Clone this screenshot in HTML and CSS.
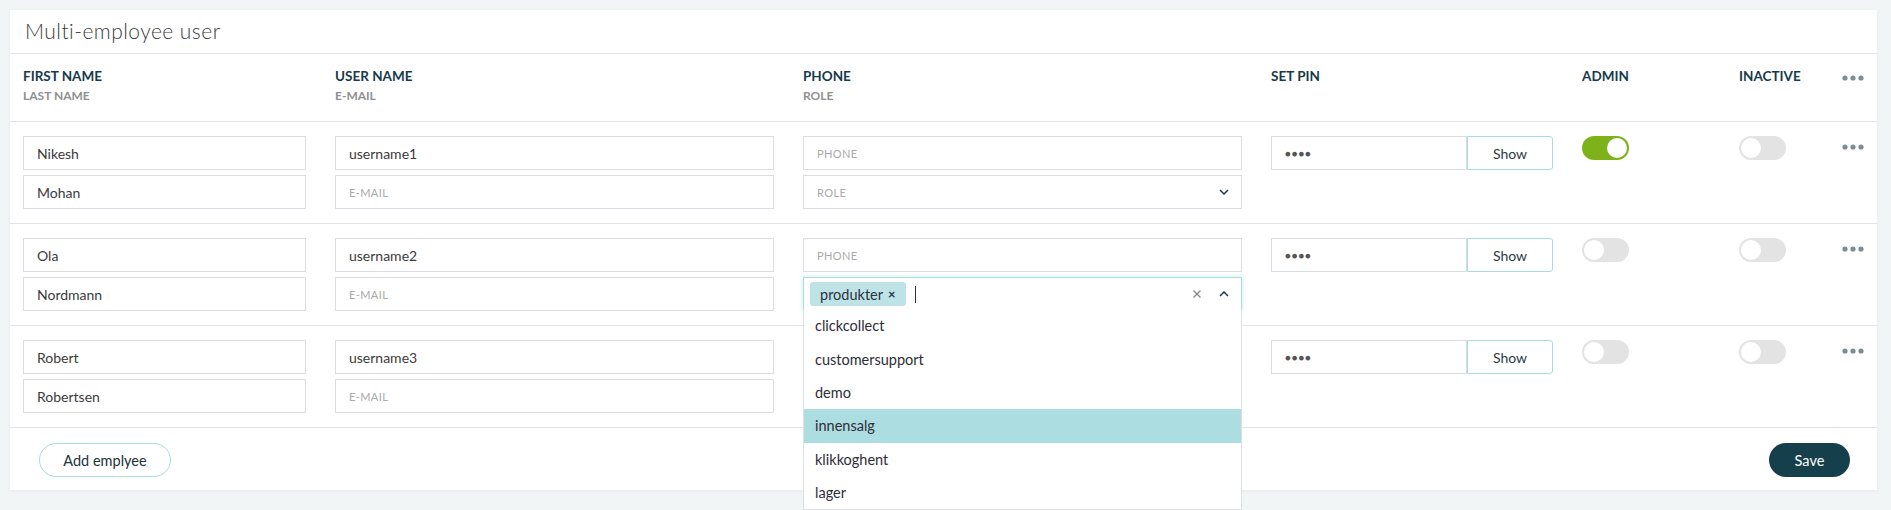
FILE: index.html
```html
<!DOCTYPE html>
<html>
<head>
<meta charset="utf-8">
<link rel="stylesheet" href="styles.css">
</head>
<body>
<div class="card">
  <div class="card-title">Multi-employee user</div>

  <div class="grid head">
    <div><div class="h1">FIRST NAME</div><div class="h2">LAST NAME</div></div>
    <div><div class="h1">USER NAME</div><div class="h2">E-MAIL</div></div>
    <div><div class="h1">PHONE</div><div class="h2">ROLE</div></div>
    <div><div class="h1">SET PIN</div></div>
    <div><div class="h1">ADMIN</div></div>
    <div><div class="h1">INACTIVE</div></div>
    <div class="dots-cell head-dots"><svg class="dots" width="22" height="6" viewBox="0 0 22 6"><circle cx="3" cy="3" r="2.6"/><circle cx="11" cy="3" r="2.6"/><circle cx="19" cy="3" r="2.6"/></svg></div>
  </div>

  <div class="grid row">
    <div class="stack"><div class="field">Nikesh</div><div class="field">Mohan</div></div>
    <div class="stack"><div class="field">username1</div><div class="field ph">E-MAIL</div></div>
    <div class="stack"><div class="field ph">PHONE</div><div class="field ph select">ROLE<svg class="chev" width="10" height="6" viewBox="0 0 10 6"><path d="M1 1l4 4 4-4"/></svg></div></div>
    <div class="pin"><div class="field pin-in">&#9679;&#9679;&#9679;&#9679;</div><div class="show">Show</div></div>
    <div><span class="toggle on"><span class="knob"></span></span></div>
    <div><span class="toggle"><span class="knob"></span></span></div>
    <div class="dots-cell"><svg class="dots" width="22" height="6" viewBox="0 0 22 6"><circle cx="3" cy="3" r="2.6"/><circle cx="11" cy="3" r="2.6"/><circle cx="19" cy="3" r="2.6"/></svg></div>
  </div>

  <div class="grid row">
    <div class="stack"><div class="field">Ola</div><div class="field">Nordmann</div></div>
    <div class="stack"><div class="field">username2</div><div class="field ph">E-MAIL</div></div>
    <div class="stack">
      <div class="field ph">PHONE</div>
      <div class="ms-wrap">
        <div class="multi">
          <span class="tag">produkter <span class="tag-x">&#215;</span></span>
          <span class="caret"></span>
          <span class="ms-icons">
            <svg class="clear" width="10" height="10" viewBox="0 0 10 10"><path d="M1.5 1.5l7 7M8.5 1.5l-7 7"/></svg>
            <svg class="chev" width="10" height="6" viewBox="0 0 10 6"><path d="M1 5l4-4 4 4"/></svg>
          </span>
        </div>
        <div class="menu">
          <div class="opt">clickcollect</div>
          <div class="opt">customersupport</div>
          <div class="opt">demo</div>
          <div class="opt active">innensalg</div>
          <div class="opt">klikkoghent</div>
          <div class="opt">lager</div>
        </div>
      </div>
    </div>
    <div class="pin"><div class="field pin-in">&#9679;&#9679;&#9679;&#9679;</div><div class="show">Show</div></div>
    <div><span class="toggle"><span class="knob"></span></span></div>
    <div><span class="toggle"><span class="knob"></span></span></div>
    <div class="dots-cell"><svg class="dots" width="22" height="6" viewBox="0 0 22 6"><circle cx="3" cy="3" r="2.6"/><circle cx="11" cy="3" r="2.6"/><circle cx="19" cy="3" r="2.6"/></svg></div>
  </div>

  <div class="grid row">
    <div class="stack"><div class="field">Robert</div><div class="field">Robertsen</div></div>
    <div class="stack"><div class="field">username3</div><div class="field ph">E-MAIL</div></div>
    <div class="stack"></div>
    <div class="pin"><div class="field pin-in">&#9679;&#9679;&#9679;&#9679;</div><div class="show">Show</div></div>
    <div><span class="toggle"><span class="knob"></span></span></div>
    <div><span class="toggle"><span class="knob"></span></span></div>
    <div class="dots-cell"><svg class="dots" width="22" height="6" viewBox="0 0 22 6"><circle cx="3" cy="3" r="2.6"/><circle cx="11" cy="3" r="2.6"/><circle cx="19" cy="3" r="2.6"/></svg></div>
  </div>

  <div class="footer">
    <button class="btn outline">Add emplyee</button>
    <button class="btn save">Save</button>
  </div>
</div>
</body>
</html>
```

FILE: styles.css
```css
html { overflow: hidden; }
* { box-sizing: border-box; }
body {
  margin: 0;
  padding: 10px 14px 0 10px;
  background: #f2f5f6;
  font-family: "Lato", "Noto Sans", sans-serif;
  color: #333;
  height: 510px;
}
.card {
  background: #fff;
  box-shadow: 0 1px 4px rgba(0, 0, 0, 0.05);
}
.card-title {
  padding: 8px 15px 10px;
  font-size: 21px;
  line-height: 25px;
  font-weight: 300;
  letter-spacing: 0.45px;
  color: #3c3c3c;
  border-bottom: 1px solid #e3e4e8;
}
.grid {
  display: grid;
  grid-template-columns: 283px 439px 439px 282px 128px 74px 22px;
  column-gap: 29px;
  padding: 0 13px;
  border-bottom: 1px solid #e3e4e8;
}
.head { padding-top: 14px; padding-bottom: 18px; }
.h1 {
  font-size: 13.5px;
  line-height: 16px;
  font-weight: 700;
  color: #173a49;
}
.h2 {
  margin-top: 5px;
  font-size: 12px;
  line-height: 14px;
  font-weight: 700;
  color: #8f8f8f;
}
.row { padding-top: 14px; padding-bottom: 14px; height: 102px; }
.stack { display: flex; flex-direction: column; gap: 5px; }
.field {
  height: 34px;
  border: 1px solid #dcdde3;
  padding: 0 13px;
  display: flex;
  align-items: center;
  font-size: 14px;
  color: #3a3a3a;
  background: #fff;
}
.field.ph {
  font-size: 11px;
  color: #a9a9a9;
  letter-spacing: 0.4px;
}
.select { justify-content: space-between; padding-right: 12px; }
.chev { fill: none; stroke: #1d3a4a; stroke-width: 1.5; }
.pin { display: flex; height: 34px; }
.pin-in { flex: 1; font-size: 9.5px; color: #555; letter-spacing: 1px; }
.show {
  width: 86px;
  border: 1px solid #a8dde0;
  border-radius: 0 3px 3px 0;
  display: flex;
  align-items: center;
  justify-content: center;
  font-size: 14px;
  color: #2b3a44;
}
.toggle {
  display: flex;
  align-items: center;
  width: 47px;
  height: 24px;
  border-radius: 12px;
  background: #e3e3e3;
  padding: 2px;
}
.toggle .knob {
  width: 20px;
  height: 20px;
  border-radius: 50%;
  background: #fff;
}
.toggle.on { background: #7db21b; justify-content: flex-end; }
.dots-cell { padding-top: 8px; }
.head-dots { padding-top: 7px; }
.dots { fill: #7d8d97; display: block; }
.ms-wrap { position: relative; }
.multi {
  height: 34px;
  border: 1px solid #a8dde0;
  box-shadow: 0 0 5px rgba(168, 221, 224, 0.6);
  display: flex;
  align-items: center;
  padding: 0 6px;
  background: #fff;
}
.tag {
  background: #bde3e6;
  border-radius: 3px;
  height: 24px;
  padding: 0 10px 0 10px;
  display: flex;
  align-items: center;
  gap: 5px;
  font-size: 14.5px;
  color: #2a3440;
}
.tag-x { font-size: 13px; font-weight: 700; }
.caret { width: 1px; height: 17px; background: #333; margin-left: 9px; }
.ms-icons { margin-left: auto; display: flex; align-items: center; gap: 17px; padding-right: 6px; }
.clear { fill: none; stroke: #8a8a8a; stroke-width: 1.4; }
.menu {
  position: absolute;
  left: 0;
  right: 0;
  top: 32px;
  background: #fff;
  border: 1px solid #dfe0e5;
  border-top: none;
  z-index: 5;
}
.opt {
  height: 33.4px;
  padding: 0 11px;
  display: flex;
  align-items: center;
  font-size: 14.5px;
  color: #2d2d38;
}
.opt.active { background: #acdde1; }
.footer {
  display: flex;
  justify-content: space-between;
  padding: 15px 27px 13px 29px;
}
.btn {
  font-family: inherit;
  height: 34px;
  border-radius: 17px;
  font-size: 14.5px;
  cursor: pointer;
}
.btn.outline {
  width: 132px;
  background: #fff;
  border: 1px solid #a8dde0;
  color: #22303a;
}
.btn.save {
  width: 81px;
  background: #163f4c;
  border: none;
  color: #fff;
}
```
